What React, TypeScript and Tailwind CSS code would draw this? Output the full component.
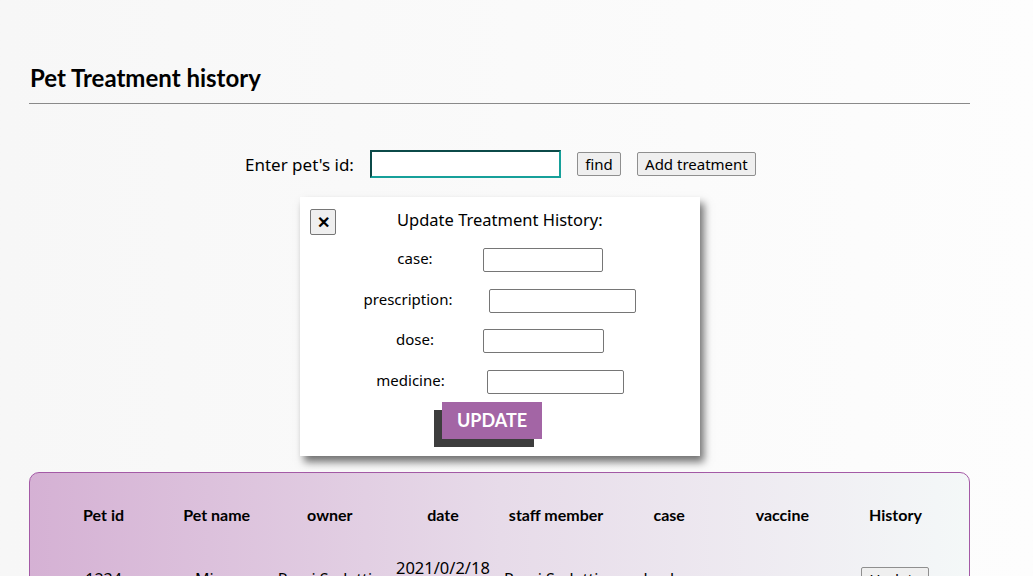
import React from "react";

const cols = ["Pet id", "Pet name", "owner", "date", "staff member", "case", "vaccine", "History"];
const bold = { fontFamily: "Lato, 'Noto Sans', sans-serif" };

export default function App() {
  return (
    <div
      className="relative w-[1033px] h-[576px] overflow-hidden bg-gradient-to-r from-[#f7f7f7] to-[#fdfdfd] text-black"
      style={{ fontFamily: "'Noto Sans', sans-serif" }}
    >
      <div className="pl-[29px] w-[970px]">
        <h1 className="pt-[62px] text-[24px] font-bold leading-[32px] pl-[1px]" style={bold}>Pet Treatment history</h1>
        <div className="mt-[9px] h-px bg-[#8a8a8a]" />

        <div className="mt-[45px] flex items-center h-[30px]">
          <span className="ml-[216px] text-[17px] leading-none">Enter pet's id:</span>
          <input className="ml-[16px] w-[191px] h-[28px] bg-white border-2 border-t-[#0b4a48] border-l-[#0b4a48] border-b-[#16a09a] border-r-[#16a09a] outline-none" />
          <button className="ml-[16px] w-[44px] h-[24px] text-[15px] leading-none bg-[#efefef] border border-[#8f8f8f] rounded-[2px]">find</button>
          <button className="ml-[16px] w-[119px] h-[24px] text-[15px] leading-none bg-[#efefef] border border-[#8f8f8f] rounded-[2px]">Add treatment</button>
        </div>

        <div className="mt-[293px] relative h-[200px] rounded-[10px] border border-[#a45aa6] bg-gradient-to-r from-[#d5b1d4] via-[#e7dbe9] to-[#f4f8f8] px-[17px] pt-[19px]">
          <div className="grid grid-cols-8 text-center">
            {cols.map((c) => (
              <div key={c} className="h-[46px] flex items-center justify-center text-[16px] font-bold" style={bold}>{c}</div>
            ))}
            <div className="h-[82px] flex items-center justify-center text-[16px]">1234</div>
            <div className="h-[82px] flex items-center justify-center text-[16px]">Mimo</div>
            <div className="h-[82px] flex items-center justify-center text-[16px]">Rami Sadettin</div>
            <div className="h-[82px] flex items-center justify-center text-[16.5px] leading-[22px]">2021/0/2/18<br />10:30</div>
            <div className="h-[82px] flex items-center justify-center text-[16px]">Rami Sadettin</div>
            <div className="h-[82px] flex items-center justify-center text-[16px]">check up</div>
            <div className="h-[82px] flex items-center justify-center text-[16px]">none</div>
            <div className="h-[82px] flex items-center justify-center">
              <button className="h-[24px] w-[68px] text-[15px] leading-none bg-[#efefef] border border-[#8f8f8f] rounded-[2px]">Update</button>
            </div>
          </div>
        </div>
      </div>

      {/* Modal */}
      <div className="absolute left-[300px] top-[197px] w-[400px] h-[259px] bg-white shadow-[4px_6px_8px_rgba(0,0,0,0.55)]">
        <div className="flex items-start pt-[12px] pl-[10px]">
          <button className="w-[26px] h-[26px] flex items-center justify-center bg-[#efefef] border border-[#767676] rounded-[2px] text-[16px] font-bold leading-none">✕</button>
          <div className="ml-[61px] mt-[-1px] text-[16.5px]">Update Treatment History:</div>
        </div>
        <div className="flex flex-col items-center mt-[13px]">
          <div className="flex items-center h-[24px] gap-[50px] text-[15px]">
            <span className="-mt-[3px]">case:</span>
            <input className="w-[120px] h-[24px] bg-white border border-[#767676] rounded-[2px]" />
          </div>
          <div className="mt-[17px] flex items-center h-[24px] gap-[37px] text-[15px]">
            <span className="-mt-[3px]">prescription:</span>
            <input className="w-[147px] h-[24px] bg-white border border-[#767676] rounded-[2px]" />
          </div>
          <div className="mt-[16px] flex items-center h-[24px] gap-[49px] text-[15px]">
            <span className="-mt-[3px]">dose:</span>
            <input className="w-[121px] h-[24px] bg-white border border-[#767676] rounded-[2px]" />
          </div>
          <div className="mt-[17px] flex items-center h-[24px] gap-[42px] text-[15px]">
            <span className="-mt-[3px]">medicine:</span>
            <input className="w-[137px] h-[24px] bg-white border border-[#767676] rounded-[2px]" />
          </div>
          <button className="mt-[8px] ml-[-16px] w-[100px] h-[37px] bg-[#a365a5] text-white text-[18px] font-bold shadow-[-8px_8px_0_#3d3d3d]" style={bold}>UPDATE</button>
        </div>
      </div>
    </div>
  );
}
